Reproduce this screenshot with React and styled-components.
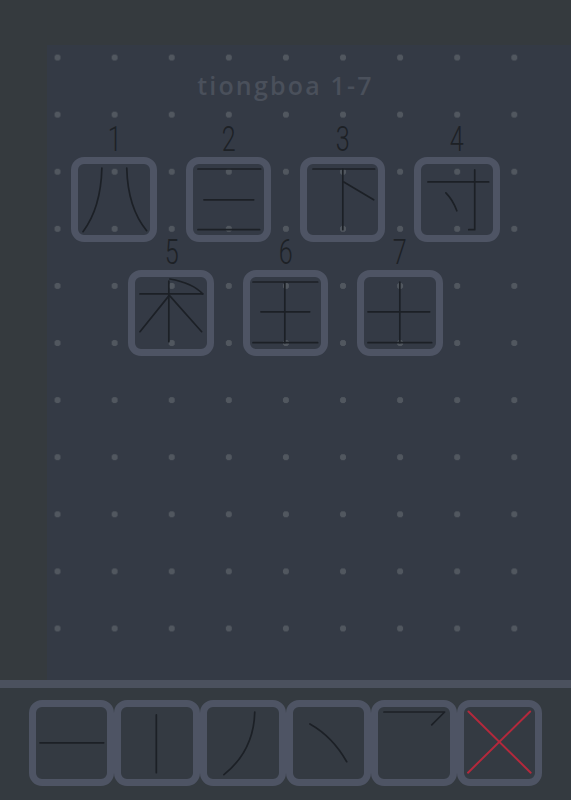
import React from "react";
import styled, { createGlobalStyle } from "styled-components";

const CELL = 57.1;
const TILE = CELL * 1.5;

const GlobalStyle = createGlobalStyle`
  html, body {
    margin: 0;
    padding: 0;
    background: #353a3e;
  }
  * {
    box-sizing: border-box;
  }
`;

const Page = styled.div`
  width: 571px;
  height: 800px;
  display: flex;
  flex-direction: column;
  overflow: hidden;
  background: #343a40;
`;

const Board = styled.div`
  height: 680px;
  padding: ${CELL / 2}px;
  background: linear-gradient(#343a45, #343a45) 47px 45px / 100% 100% no-repeat,
    #353a3e;
`;

const DotField = styled.div`
  height: ${CELL * 11}px;
  display: flex;
  flex-direction: column;
  align-items: center;
  background-image: radial-gradient(
    circle,
    #51575f 0,
    #51575f 2.8px,
    rgba(81, 87, 95, 0) 3.5px
  );
  background-size: ${CELL}px ${CELL}px;
`;

const Title = styled.h1`
  margin: 40px 0 0;
  height: 32px;
  font-family: "Open Sans", Lato, sans-serif;
  font-weight: 600;
  font-size: 25px;
  line-height: 32px;
  letter-spacing: 2.2px;
  color: #4a505b;
`;

const TileRow = styled.div`
  display: flex;
  gap: ${CELL / 2}px;
  margin-top: ${(p) => p.$offset || 0}px;
`;

const Tile = styled.div`
  display: flex;
  flex-direction: column;
  align-items: center;
`;

const Label = styled.span`
  display: block;
  height: 28px;
  padding-bottom: 6px;
  font-family: Roboto, "DejaVu Sans", sans-serif;
  font-weight: 300;
  font-size: 35px;
  line-height: 22px;
  color: #1d2126;
  transform: scaleX(0.72);
`;

const Card = styled.div`
  width: ${TILE}px;
  height: ${TILE}px;
  border: 7px solid #4e5464;
  border-radius: 13px;
  display: flex;
`;

const Divider = styled.div`
  height: 8px;
  background: #4b515e;
`;

const Toolbar = styled.div`
  display: flex;
  justify-content: center;
  padding-top: 12px;
`;

const ToolButton = styled(Card).attrs({ as: "button" })`
  padding: 0;
  background: #343a42;
  cursor: pointer;
`;

const Strokes = styled.svg`
  width: 100%;
  height: 100%;
  display: block;
  fill: none;
  stroke: ${(p) => p.$color || "#1c2026"};
  stroke-width: ${(p) => p.$width || 1.7};
  stroke-linecap: round;
  stroke-linejoin: round;
`;

const CHARS = [
  { n: 1, d: ["M24 4 Q23 44 5 68", "M49 4 Q50 44 69 67"] },
  { n: 2, d: ["M5 5 L68 5", "M11 36 L61 36", "M5 66 L67 66"] },
  { n: 3, d: ["M6 5 L68 5", "M36 5 L36 66", "M37 18 L67 36"] },
  {
    n: 4,
    d: ["M7 18 L68 18", "M54 6 L54 66 L48 66", "M25 29 Q32 36 36 47"],
  },
  {
    n: 5,
    d: [
      "M5 17 L68 17",
      "M34 4 L34 65",
      "M34 19 L5 55",
      "M35 19 L67 55",
      "M35 2 Q58 6 68 17",
    ],
  },
  { n: 6, d: ["M3 5 L68 5", "M11 35 L60 35", "M3 66 L68 66", "M35 5 L35 66"] },
  { n: 7, d: ["M36 5 L36 66", "M4 35 L66 35", "M4 66 L68 66"] },
];

const TOOLS = [
  { d: ["M4 36 L68 36"] },
  { d: ["M35.5 8 L35.5 66"] },
  { d: ["M48 5 Q47 44 17 68"] },
  { d: ["M17 17 Q40 30 54 55"] },
  { d: ["M6 5 L67 5 L54 18"] },
  { d: ["M4.5 4.5 L67 66", "M66.5 4.5 L4 66"], color: "#b3293c", width: 2 },
];

function Glyph({ paths, color, width }) {
  return (
    <Strokes viewBox="0 0 72 72" $color={color} $width={width}>
      {paths.map((d, i) => (
        <path key={i} d={d} />
      ))}
    </Strokes>
  );
}

function CharTile({ char }) {
  return (
    <Tile>
      <Label>{char.n}</Label>
      <Card>
        <Glyph paths={char.d} />
      </Card>
    </Tile>
  );
}

export default function App() {
  return (
    <>
      <GlobalStyle />
      <Page>
        <Board>
          <DotField>
            <Title>tiongboa 1-7</Title>
            <TileRow $offset={28}>
              {CHARS.slice(0, 4).map((c) => (
                <CharTile key={c.n} char={c} />
              ))}
            </TileRow>
            <TileRow>
              {CHARS.slice(4).map((c) => (
                <CharTile key={c.n} char={c} />
              ))}
            </TileRow>
          </DotField>
        </Board>
        <Divider />
        <Toolbar>
          {TOOLS.map((t, i) => (
            <ToolButton key={i}>
              <Glyph paths={t.d} color={t.color} width={t.width} />
            </ToolButton>
          ))}
        </Toolbar>
      </Page>
    </>
  );
}
